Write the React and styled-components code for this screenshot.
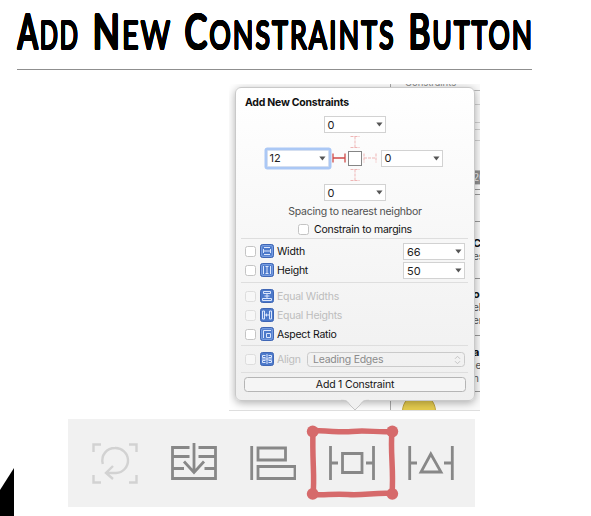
import React, { useLayoutEffect, useRef, useState } from "react";
import styled, { createGlobalStyle, css } from "styled-components";

const Global = createGlobalStyle`
  * { box-sizing: border-box; }
  body { margin: 0; background: #fff; font-family: Inter, "Liberation Sans", sans-serif; }
`;

// Shadows placed on a circle thicken letters while keeping their ends round.
const roundOutline = (r) =>
  Array.from({ length: 16 }, (_, i) => {
    const a = (i * Math.PI) / 8;
    return `${(Math.cos(a) * r).toFixed(2)}px ${(Math.sin(a) * r).toFixed(2)}px 0 #000`;
  }).join(",");

const Slide = styled.main`
  position: relative;
  width: 591px;
  height: 516px;
  overflow: hidden;
  background: #fff;
`;

const Heading = styled.h1`
  display: flex;
  width: 515px;
  height: 70px;
  margin: 0 0 0 17px;
  padding-top: 1px;
  border-bottom: 1px solid #8f8f8f;
  font-weight: 400;
`;

const WordSlot = styled.span`
  width: ${(p) => p.$width}px;
  margin-right: ${(p) => p.$gap}px;
  flex: none;
`;

const WordText = styled.span`
  display: inline-block;
  transform-origin: 0 50%;
  padding-left: 1px;
  font: 400 39px/58px Lato, sans-serif;
  letter-spacing: 3px;
  text-transform: uppercase;
  white-space: nowrap;
  color: #000;
  text-shadow: ${roundOutline(0.8)};
  &::first-letter { font-size: 49px; text-shadow: ${roundOutline(1.3)}; }
`;

const Capture = styled.section`
  position: relative;
  width: 251px;
  height: 327px;
  margin: 14px 0 0 229px;
  overflow: hidden;
  border-bottom: 1px solid #dedede;
`;

const Backdrop = styled.div`
  display: flex;
  flex-direction: column;
  width: 90px;
  height: 326px;
  margin-left: 161px;
  border-left: 1px solid #aaa;
  background: #fafafa;
`;

const Crumb = styled.div`
  display: flex;
  align-items: flex-end;
  height: 2px;
  flex: none;
  padding-left: 14px;
  overflow: hidden;
  font-size: 9.5px;
  line-height: 7px;
  color: #888;
`;

const Band = styled.div`
  height: ${(p) => p.$h}px;
  flex: none;
  border-bottom: 1px solid ${(p) => p.$line || "#d0d0d0"};
  background: ${(p) => p.$bg || "transparent"};
  padding: ${(p) => p.$pad || 0}px 0 0 82px;
  overflow: hidden;
  font-size: 10px;
  line-height: 13px;
  color: ${(p) => (p.$bg ? "#eee" : "#555")};
  white-space: nowrap;
  b { color: #111; font-size: 11px; }
`;

const Disc = styled.div`
  width: 34px;
  height: 34px;
  flex: none;
  margin: 2px 0 0 11px;
  border: 1px solid #c1a53d;
  border-radius: 50%;
  background: #e6cd4f;
`;

const Popover = styled.div`
  position: absolute;
  left: 6px;
  top: 3px;
  width: 240px;
  height: 314px;
  padding: 8px 9px 0;
  border: 1px solid #c9c9c9;
  border-radius: 6px;
  background: linear-gradient(#fff, #fafafa 30%, #efefef);
  box-shadow: 0 2px 8px rgba(0, 0, 0, 0.32);
`;

const Pointer = styled.svg`
  position: absolute;
  left: 106px;
  top: 312px;
`;

const Label = styled.span`
  font-size: 10.5px;
  line-height: 13px;
  letter-spacing: -0.25px;
  font-weight: ${(p) => (p.$bold ? 700 : 400)};
  color: ${(p) => (p.$dim ? "#bdbdbd" : p.$soft ? "#505050" : "#111")};
  white-space: nowrap;
`;

const Title = styled(Label)`
  display: block;
  height: 20px;
  color: #111;
`;

const Spacing = styled.div`
  display: grid;
  grid-template-columns: 67px 16px 15px 16px 67px;
  grid-template-rows: 17px 17px 16px 18px 17px;
  align-items: center;
  justify-items: center;
  width: 181px;
  margin: 0 0 0 19px;
`;

const Field = styled.div`
  display: flex;
  align-items: center;
  justify-content: space-between;
  width: 62px;
  height: 17px;
  padding: 0 2px 0 ${(p) => (p.$focus ? 2 : 3)}px;
  border: 1px solid #d2d2d2;
  background: #fff;
  font-size: 11px;
  color: #222;
  grid-area: ${(p) => p.$area || "auto"};
  ${(p) => p.$focus && css`
    border-color: #d5dff0;
    box-shadow: 0 0 0 2.5px #abc8f5;
    border-radius: 1px;
  `}
`;

const Anchor = styled.div`
  grid-area: 3 / 3;
  width: 14px;
  height: 15px;
  border: 1px solid #858585;
  background: #fff;
`;

const Strut = styled.svg`
  display: block;
  grid-area: ${(p) => p.$area};
`;

const Caption = styled.div`
  display: flex;
  justify-content: center;
  height: 13px;
  margin-top: 4px;
`;

const Margins = styled.div`
  display: flex;
  align-items: center;
  gap: 5px;
  height: 14px;
  margin: 4px 0 0 53px;
`;

const Box = styled.span`
  width: 11px;
  height: 11px;
  flex: none;
  border: 1px solid ${(p) => (p.$dim ? "#dddddd" : "#c4c4c4")};
  border-radius: 2.5px;
  background: ${(p) => (p.$dim ? "#f7f7f7" : "#fff")};
`;

const Group = styled.div`
  margin: ${(p) => p.$top || 0}px -3px 0 -4px;
  padding: ${(p) => p.$pad}px 3px 0 4px;
  height: ${(p) => p.$h}px;
  border-top: 1px solid #dedede;
`;

const Row = styled.div`
  display: flex;
  align-items: center;
  height: 19px;
  svg { flex: none; }
`;

const Badge = styled.svg`
  display: block;
  margin: -2px 3px 0 4px;
`;

const Push = styled.span`
  flex: 1;
`;

const Select = styled.div`
  display: flex;
  align-items: center;
  justify-content: space-between;
  width: 158px;
  height: 15px;
  margin-left: auto;
  padding: 0 3px 0 5px;
  border: 1px solid #cacaca;
  border-radius: 3.5px;
  font-size: 10.5px;
  letter-spacing: -0.25px;
  color: #8b8b8b;
`;

const Action = styled.button`
  display: block;
  width: 222px;
  height: 15px;
  margin-left: -1px;
  padding: 0;
  border: 1px solid #b5b5b5;
  border-radius: 3.5px;
  background: #f5f5f5;
  font: 400 10.5px/13px Inter, sans-serif;
  letter-spacing: -0.2px;
  color: #151515;
`;

const Toolbar = styled.nav`
  position: relative;
  display: flex;
  align-items: center;
  gap: 33px;
  width: 407px;
  height: 88px;
  margin: 8px 0 0 68px;
  padding-left: 24px;
  background: #f1f1f1;
`;

const Tool = styled.svg`
  display: block;
  flex: none;
  fill: none;
  stroke: ${(p) => (p.$dim ? "#d2d2d2" : "#888")};
  stroke-width: ${(p) => (p.$dim ? 2.4 : 2.8)};
`;

const Highlight = styled.svg`
  position: absolute;
  left: 237px;
  top: 4px;
`;

const Wedge = styled.svg`
  position: absolute;
  left: 0;
  bottom: 0;
`;

function Word({ width, gap = 0, children }) {
  const ref = useRef(null);
  const [scale, setScale] = useState(1);
  useLayoutEffect(() => setScale((width + 2) / ref.current.offsetWidth), [width]);
  return (
    <WordSlot $width={width} $gap={gap}>
      <WordText ref={ref} style={{ transform: `scaleX(${scale})` }}>{children}</WordText>
    </WordSlot>
  );
}

const Caret = () => (
  <svg width="7" height="5" viewBox="0 0 7 5"><path d="M.3.5h6.2L3.4 4.6Z" fill="#555" /></svg>
);

const Combo = ({ value, area, focus }) => (
  <Field $area={area} $focus={focus}><span>{value}</span><Caret /></Field>
);

const HStrut = ({ area, active }) => (
  <Strut $area={area} width="14" height="10" viewBox="0 0 14 10" fill="none"
    stroke={active ? "#cf4a48" : "#efb5b5"} strokeWidth={active ? 1.3 : 1} strokeDasharray={active ? undefined : "3 1"}>
    <path d="M1 .5v9M13 .5v9M1 5h12" />
  </Strut>
);

const VStrut = ({ area }) => (
  <Strut $area={area} width="10" height="14" viewBox="0 0 10 14" fill="none" stroke="#efb5b5" strokeDasharray="3 1">
    <path d="M.5 1.5h9M.5 12.5h9M5 1.5v11" />
  </Strut>
);

const glyphs = {
  width: <path d="M4 3.5h6M4 10.5h6M3.5 5v4M10.5 5v4M4 7h6" />,
  height: <path d="M3.5 3v8M10.5 3v8M5.5 3.5h3M5.5 10.5h3M7 4v6" />,
  equalW: <path d="M3.5 2.5h7v2h-7ZM2.5 9.5h9v2h-9ZM4.5 7h5M7 5v4" />,
  equalH: <path d="M2.5 3v8h2V3ZM9.5 3v8h2V3ZM5 7h4M6.5 5.5v3" />,
  aspect: <path d="M3.5 11V3.5H11M6.5 6.5h4v4h-4Z" />,
  align: <path d="M7 2v10M5.5 3.5h-3v2h3M5.5 8.5h-3v2h3M8.5 3.5h3v2h-3M8.5 8.5h3v2h-3M2 7h10" />,
};

const ConstraintIcon = ({ kind }) => (
  <Badge width="14" height="14" viewBox="0 0 14 14" fill="none" stroke="#dbe6fc">
    <rect x=".5" y=".5" width="13" height="13" rx="2" fill="#4c79ca" stroke="#3f66b5" />
    {kind !== "equalW" && kind !== "equalH" && kind !== "align" && (
      <rect x="1.7" y="1.7" width="10.6" height="10.6" rx="1" stroke="#8fb1ec" strokeWidth=".8" />
    )}
    {glyphs[kind]}
  </Badge>
);

const Option = ({ kind, label, dim, value }) => (
  <Row>
    <Box $dim={dim} />
    <ConstraintIcon kind={kind} />
    <Label $dim={dim}>{label}</Label>
    {value && <><Push /><Combo value={value} /></>}
  </Row>
);

export default function App() {
  return (
    <Slide>
      <Global />
      <Heading>
        <Word width={61} gap={14}>Add</Word>
        <Word width={78} gap={14}>New</Word>
        <Word width={210} gap={14}>Constraints</Word>
        <Word width={124}>Button</Word>
      </Heading>

      <Capture>
        <Backdrop>
          <Crumb>Constraints</Crumb>
          <Band $h={5} $line="#bbb" />
          <Band $h={14} />
          <Band $h={18} />
          <Band $h={7} />
          <Band $h={11} />
          <Band $h={30} $line="#bbb" />
          <Band $h={14} $bg="#8f8f8f">20</Band>
          <Band $h={5} $line="#999" />
          <Band $h={5} $line="#999" />
          <Band $h={27} $line="#999" />
          <Band $h={57} $pad={15} $line="#999"><b>C</b><br />es</Band>
          <Band $h={57} $pad={9} $line="#999"><b>o</b><br />eh<br />er</Band>
          <Band $h={56} $pad={10} $line="#999"><b>a</b><br />le<br />n</Band>
          <Disc />
        </Backdrop>

        <Popover>
          <Title as="div" $bold>Add New Constraints</Title>
          <Spacing>
            <Combo value="0" area="1 / 2 / 2 / 5" />
            <VStrut area="2 / 3" />
            <Combo value="12" area="3 / 1" focus />
            <HStrut area="3 / 2" active />
            <Anchor />
            <HStrut area="3 / 4" />
            <Combo value="0" area="3 / 5" />
            <VStrut area="4 / 3" />
            <Combo value="0" area="5 / 2 / 6 / 5" />
          </Spacing>
          <Caption><Label $soft>Spacing to nearest neighbor</Label></Caption>
          <Margins><Box /><Label>Constrain to margins</Label></Margins>

          <Group $top={2} $pad={3} $h={44}>
            <Option kind="width" label="Width" value="66" />
            <Option kind="height" label="Height" value="50" />
          </Group>
          <Group $pad={4} $h={63}>
            <Option kind="equalW" label="Equal Widths" dim />
            <Option kind="equalH" label="Equal Heights" dim />
            <Option kind="aspect" label="Aspect Ratio" />
          </Group>
          <Group $pad={4} $h={27}>
            <Row>
              <Box $dim />
              <ConstraintIcon kind="align" />
              <Label $dim>Align</Label>
              <Select>
                <span>Leading Edges</span>
                <svg width="7" height="10" viewBox="0 0 7 10" fill="none" stroke="#c4c4c4">
                  <path d="m1 3.8 2.5-2.5L6 3.8M1 6.2l2.5 2.5L6 6.2" />
                </svg>
              </Select>
            </Row>
          </Group>
          <Group $pad={4} $h={24}><Action>Add 1 Constraint</Action></Group>
        </Popover>
        <Pointer width="40" height="15" viewBox="0 0 40 15">
          <path d="M6 4C12 4 12 5 15 9l5 5 5-5c3-4 3-5 9-5V0H6Z" fill="#f0f0f0" />
          <path d="M6 4.3C12 4.3 12 5 15 9l5 5 5-5c3-4 3-4.7 9-4.7" fill="none" stroke="#c5c5c5" />
        </Pointer>
      </Capture>

      <Toolbar>
        <Tool $dim width="46" height="42" viewBox="0 0 46 42">
          <path d="M1.5 10V2.5H9M37 2.5h7.5V10M44.5 33v7.5H37M9 40.5H1.5V33" />
          <path d="M10.8 22C8.5 13 15 6 23 6a12.5 12.5 0 0 1 1 25H14M21 24l-7 7 7 6" />
        </Tool>
        <Tool width="46" height="42" viewBox="0 0 46 42">
          <path d="M18.5 5.5h-17v31h43v-31h-17M2 14.5h16.5M27.5 14.5H44M2 26.5h11M33.5 26.5H44M23 1v30M13 19.5l10 11 10-11" />
        </Tool>
        <Tool width="46" height="42" viewBox="0 0 46 42">
          <path d="M1.7 4v34M8 6h27.5v12H8ZM8 24.5h37v12H8Z" />
        </Tool>
        <Tool width="46" height="42" viewBox="0 0 46 42">
          <path d="M1.5 4v34M44.5 4v34M2 21h7M37 21h7M13.5 11.5h19.5v19H13.5Z" />
        </Tool>
        <Tool width="46" height="42" viewBox="0 0 46 42">
          <path d="M1.7 4v34M44.3 4v34M2 21h7M36 21h8M22.8 12 13 30h20Z" />
        </Tool>
        <Highlight width="95" height="78" viewBox="0 0 95 78">
          <path d="M8 8C24 7 33 10 47 8.5s26 1 40 0c-2 20 2 39 0 62-17-1-28 2-44 1s-23 1-35 0c2-18-1-33 0-63.5Z"
            fill="none" stroke="#d66a6b" strokeWidth="5.5" />
          <g fill="#d66a6b">
            <circle cx="7.7" cy="8.5" r="5.9" />
            <circle cx="87.3" cy="8.5" r="5.9" />
            <circle cx="7.7" cy="70.8" r="5.9" />
            <circle cx="87.3" cy="70.8" r="5.9" />
          </g>
        </Highlight>
      </Toolbar>

      <Wedge width="15" height="48" viewBox="0 0 15 48">
        <path d="M14 0v48H0V22Z" fill="#000" />
      </Wedge>
    </Slide>
  );
}
